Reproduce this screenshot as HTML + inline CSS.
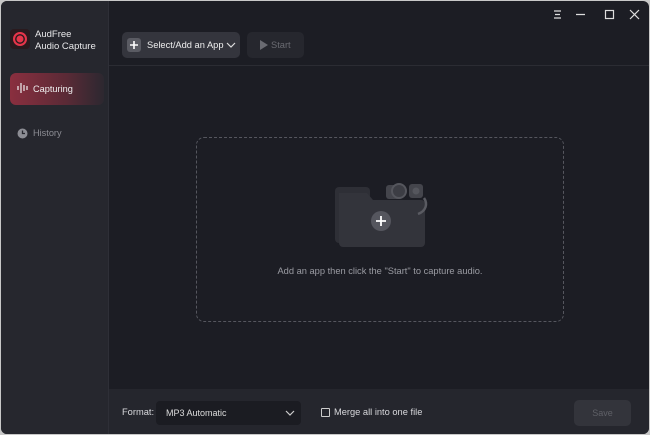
<!DOCTYPE html>
<html><head><meta charset="utf-8"><style>
*{margin:0;padding:0;box-sizing:border-box}
body{width:650px;height:435px;background:#c8c8c8;font-family:"Liberation Sans",sans-serif;overflow:hidden;position:relative}
.win{position:absolute;left:1px;top:1px;width:648px;height:433px;background:#1c1d24;border-radius:6px;overflow:hidden}
.side{position:absolute;left:0;top:0;width:108px;height:433px;background:#26272e;border-right:1px solid #2e2f37}
.logo{position:absolute;left:9px;top:28px;width:20px;height:20px;border-radius:4px;background:#2a1a1e}
.logo:after{content:"";position:absolute;left:3px;top:3px;width:10px;height:10px;border-radius:50%;border:2px solid #e6354a;background:#e6354a;box-shadow:inset 0 0 0 1.5px #2a1a1e}
.title{position:absolute;left:34px;top:28px;color:#e8e8ea;font-size:9.5px;line-height:11.5px}
.cap{position:absolute;left:9px;top:72px;width:94px;height:32px;border-radius:6px;background:linear-gradient(90deg,#8a2f3f,#5a2a36 60%,#2c2830);color:#f0f0f0;font-size:9.2px;line-height:32px;padding-left:23px}
.hist{position:absolute;left:32px;top:127px;color:#8c8d94;font-size:9.2px}
.top{position:absolute;left:108px;top:0;right:0;height:65px;border-bottom:1px solid #2b2c33}
.btn1{position:absolute;left:121px;top:31px;width:118px;height:26px;border-radius:5px;background:#34353d;color:#eee;font-size:9.3px;line-height:26px;padding-left:25px}
.btn2{position:absolute;left:246px;top:31px;width:57px;height:26px;border-radius:5px;background:#26272e;color:#6a6b72;font-size:9.3px;line-height:26px;padding-left:24px}
.drop{position:absolute;left:195px;top:136px;width:368px;height:185px;border:1px dashed #55565e;border-radius:8px}
.msg{position:absolute;left:195px;top:265px;width:368px;text-align:center;color:#9a9ba2;font-size:9.3px}
.bot{position:absolute;left:108px;top:388px;right:0;height:45px;background:#25262d}
.lbl{position:absolute;color:#d8d8dc;font-size:9.3px}
.sel{position:absolute;left:155px;top:400px;width:145px;height:24px;border-radius:4px;background:#1b1c22;color:#ddd;font-size:9px;line-height:24px;padding-left:10px}
.save{position:absolute;left:573px;top:399px;width:57px;height:26px;border-radius:5px;background:#33343b;color:#5f6067;font-size:9px;line-height:26px;text-align:center}
</style></head><body><div class="win">
<div class="side"></div>
<div class="logo"></div>
<div class="title">AudFree<br>Audio Capture</div>
<div class="cap">Capturing</div>
<svg style="position:absolute;left:16px;top:81px" width="12" height="12"><g stroke="#eee" stroke-width="1.2"><line x1="1" y1="4" x2="1" y2="8"/><line x1="4" y1="1" x2="4" y2="11"/><line x1="7" y1="3" x2="7" y2="9"/><line x1="10" y1="4" x2="10" y2="8"/></g></svg>
<svg style="position:absolute;left:16px;top:127px" width="11" height="11"><circle cx="5.5" cy="5.5" r="5" fill="#8c8d94"/><path d="M5.5 2.5V5.5H8" stroke="#26272e" stroke-width="1.3" fill="none"/></svg>
<div class="hist">History</div>
<div class="top"></div>
<svg style="position:absolute;left:550px;top:7px" width="90" height="14"><g stroke="#ddd" stroke-width="1.2" fill="none"><path d="M3 3h7M4 6.5h5M3 10h7"/><path d="M25 6.5h9"/><rect x="54.5" y="2.5" width="8" height="8"/><path d="M79 2l9 9M88 2l-9 9"/></g></svg>
<div class="btn1">Select/Add an App</div>
<svg style="position:absolute;left:126px;top:37px" width="14" height="14"><rect width="14" height="14" rx="3" fill="#5a5b63"/><path d="M7 3v8M3 7h8" stroke="#fff" stroke-width="1.6"/></svg>
<svg style="position:absolute;left:225px;top:41px" width="10" height="6"><path d="M1 1l4 4 4-4" stroke="#ddd" stroke-width="1.2" fill="none"/></svg>
<div class="btn2">Start</div>
<svg style="position:absolute;left:258px;top:38px" width="10" height="12"><path d="M1 1l8 5-8 5z" fill="#6a6b72"/></svg>
<div class="drop"></div>
<svg style="position:absolute;left:330px;top:180px" width="100" height="70">
<rect x="4" y="6" width="35" height="56" rx="4" fill="#2e2f36"/>
<path d="M8 12h28l6 7h48a4 4 0 0 1 4 4v39a4 4 0 0 1-4 4H12a4 4 0 0 1-4-4z" fill="#33343b"/>
<rect x="55" y="4" width="14" height="14" rx="3" fill="#44454c"/>
<circle cx="68" cy="10" r="7" fill="#3c3d44" stroke="#55565d" stroke-width="2"/>
<rect x="78" y="3" width="14" height="14" rx="3" fill="#44454c"/><circle cx="85" cy="10" r="3.5" fill="#55565d"/>
<path d="M93 17c4 6 2 13-6 16" stroke="#5a5b62" stroke-width="2.5" fill="none"/>
<circle cx="50" cy="40" r="10" fill="#55565e"/><path d="M50 35v10M45 40h10" stroke="#fff" stroke-width="1.8"/>
</svg>
<div class="msg">Add an app then click the "Start" to capture audio.</div>
<div class="bot"></div>
<div class="lbl" style="left:121px;top:406px">Format:</div>
<div class="sel">MP3 Automatic</div>
<svg style="position:absolute;left:284px;top:409px" width="10" height="6"><path d="M1 1l4 4 4-4" stroke="#ccc" stroke-width="1.2" fill="none"/></svg>
<div style="position:absolute;left:320px;top:407px;width:9px;height:9px;border:1px solid #ccc;border-radius:1px"></div>
<div class="lbl" style="left:333px;top:406px">Merge all into one file</div>
<div class="save">Save</div>
</div></body></html>
